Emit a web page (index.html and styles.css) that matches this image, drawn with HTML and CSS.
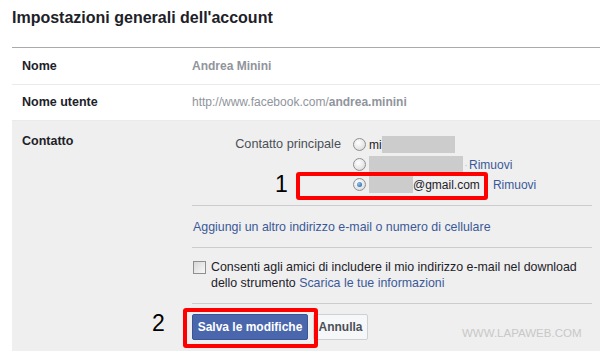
FILE: index.html
```html
<!DOCTYPE html>
<html lang="it">
<head>
    <meta charset="UTF-8">
    <title>Impostazioni generali dell'account</title>
    <link rel="stylesheet" href="styles.css">
</head>
<body>
    <div class="page">
        <h2 class="title">Impostazioni generali dell'account</h2>

        <div class="settings">
            <div class="row">
                <div class="label">Nome</div>
                <div class="value strong">Andrea Minini</div>
            </div>
            <div class="row">
                <div class="label">Nome utente</div>
                <div class="value">http://www.facebook.com/<b>andrea.minini</b></div>
            </div>

            <div class="row edit">
                <div class="label">Contatto</div>
                <div class="content">
                    <div class="contacts">
                        <div class="contact-title">Contatto principale</div>
                        <div class="contact-list">
                            <div class="contact">
                                <span class="radio"></span>
                                <span class="mail">mi<span class="blur" style="width:73px"></span></span>
                            </div>
                            <div class="contact">
                                <span class="radio"></span>
                                <span class="mail"><span class="blur" style="width:94px"></span></span>
                                <span class="dot">·</span><a href="#">Rimuovi</a>
                            </div>
                            <div class="contact">
                                <span class="radio checked"></span>
                                <span class="mail"><span class="blur" style="width:44px"></span>@gmail.com</span>
                                <span class="dot wide">·</span><a href="#">Rimuovi</a>
                            </div>
                        </div>
                    </div>

                    <div class="block">
                        <a href="#">Aggiungi un altro indirizzo e-mail o numero di cellulare</a>
                    </div>

                    <div class="block check-block">
                        <span class="checkbox"></span>
                        <p>Consenti agli amici di includere il mio indirizzo e-mail nel download dello strumento <a href="#">Scarica le tue informazioni</a></p>
                    </div>

                    <div class="actions">
                        <button class="save-btn">Salva le modifiche</button>
                        <button class="cancel-btn">Annulla</button>
                    </div>
                </div>
            </div>
        </div>

        <!-- annotazioni sopra lo screenshot -->
        <span class="step step-1">1</span>
        <span class="mark mark-1"></span>
        <span class="step step-2">2</span>
        <span class="mark mark-2"></span>
        <span class="watermark">WWW.LAPAWEB.COM</span>
    </div>
</body>
</html>
```

FILE: styles.css
```css
body {
    margin: 0;
    padding: 0;
    font-family: 'Liberation Sans', Arial, sans-serif;
    font-size: 12px;
    color: #1d2129;
    background: #ffffff;
}

.page {
    position: relative;
    width: 600px;
    height: 359px;
    padding-left: 12px;
    box-sizing: border-box;
    overflow: hidden;
}

.title {
    margin: 0;
    height: 48px;
    padding-top: 9px;
    box-sizing: border-box;
    font-size: 16px;
    font-weight: bold;
    color: #1d2129;
    border-bottom: 1px solid #aaaaaa;
}

.row {
    display: flex;
    border-bottom: 1px solid #e9eaed;
}

.row .label {
    width: 180px;
    padding-left: 10px;
    box-sizing: border-box;
    font-size: 12.5px;
    font-weight: bold;
    color: #1d2129;
    line-height: 36px;
    flex-shrink: 0;
}

.row .value {
    line-height: 36px;
    color: #90949c;
}

.row + .row .label,
.row + .row .value {
    line-height: 35px;
}

.row .value.strong,
.row .value b {
    font-weight: bold;
}

.row.edit {
    background: #efefef;
    border-bottom: none;
    height: 230px;
}

.row.edit .label {
    line-height: 15px;
    padding-top: 13px;
}

.content {
    width: 400px;
    padding-top: 14px;
    font-size: 12.4px;
}

.contacts {
    display: flex;
    height: 70px;
    border-bottom: 1px solid #cccccc;
}

.contact-title {
    width: 149px;
    text-align: right;
    color: #4b4f56;
    font-size: 12.7px;
    line-height: 19px;
}

.contact-list {
    padding-left: 12px;
}

.contact {
    display: flex;
    align-items: center;
    height: 19px;
    margin-bottom: 1px;
    font-size: 12px;
    color: #1d2129;
}

.radio {
    width: 11px;
    height: 11px;
    border: 1px solid #8e8f8f;
    border-radius: 50%;
    background: radial-gradient(circle at 40% 35%, #ffffff 0%, #e6e6e6 60%, #c9c9c9 100%);
    margin-right: 3px;
    position: relative;
    flex-shrink: 0;
}

.radio.checked::after {
    content: "";
    position: absolute;
    left: 3px;
    top: 3px;
    width: 5px;
    height: 5px;
    border-radius: 50%;
    background: radial-gradient(circle at 35% 35%, #8fc3f0, #1a5aa0);
}

.mail {
    display: flex;
    align-items: center;
}

.blur {
    display: inline-block;
    height: 17px;
    background: #cccccc;
}

.dot {
    color: #c4cbda;
    margin: 0 1px 0 1px;
}

.dot.wide {
    margin: 0 4px 0 5px;
}

a {
    color: #3b5998;
    text-decoration: none;
}

.block {
    padding: 13px 0 12px 1px;
    line-height: 16px;
    border-bottom: 1px solid #cccccc;
}

.check-block {
    display: flex;
    align-items: flex-start;
    padding: 11px 0 12px 1px;
    color: #1d2129;
}

.check-block p {
    margin: 0;
    font-size: 12.4px;
    line-height: 16px;
}

.checkbox {
    width: 11px;
    height: 11px;
    border: 1px solid #8f8f8f;
    background: linear-gradient(135deg, #d8d8d8, #f8f8f8);
    margin: 2px 5px 0 0;
    flex-shrink: 0;
}

.actions {
    display: flex;
    gap: 5px;
    padding-top: 10px;
}

.save-btn,
.cancel-btn {
    height: 26px;
    font-family: 'Liberation Sans', Arial, sans-serif;
    font-size: 12px;
    font-weight: bold;
    border-radius: 2px;
    white-space: nowrap;
    cursor: pointer;
}

.save-btn {
    background: #4a67ad;
    border: 1px solid #3b5495;
    color: #ffffff;
    width: 116px;
    padding: 0;
}

.cancel-btn {
    background: #f6f7f9;
    border: 1px solid #ced0d4;
    color: #4b4f56;
    width: 55px;
    padding: 0;
}

.step {
    position: absolute;
    font-size: 23px;
    color: #000000;
    line-height: 23px;
}

.step-1 {
    left: 275px;
    top: 173px;
}

.step-2 {
    left: 152px;
    top: 312px;
}

.mark {
    position: absolute;
    border: 4px solid #ff0000;
    border-radius: 3px;
    box-sizing: border-box;
}

.mark-1 {
    left: 296px;
    top: 172px;
    width: 192px;
    height: 28px;
}

.mark-2 {
    left: 183px;
    top: 308px;
    width: 135px;
    height: 40px;
}

.watermark {
    position: absolute;
    left: 462px;
    top: 327px;
    font-size: 11.5px;
    color: #c8c8c8;
}
```
